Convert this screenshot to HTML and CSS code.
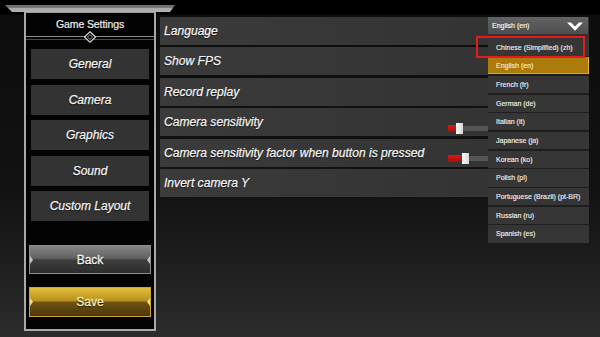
FILE: index.html
```html
<!DOCTYPE html>
<html>
<head>
<meta charset="utf-8">
<link rel="stylesheet" href="styles.css">
</head>
<body>
<div class="screen">
  <div class="topbar"></div>
  <div class="main">
    <aside class="panel">
      <div class="title">Game Settings</div>
      <div class="divider">
        <svg class="ornament" width="14" height="12" viewBox="0 0 14 12">
          <polygon points="7,0.8 12.6,6 7,11.2 1.4,6" fill="#000" stroke="#d8d8d8" stroke-width="1.2"/>
          <polygon points="7,3.6 9.6,6 7,8.4 4.4,6" fill="#000" stroke="#9a9a9a" stroke-width="1"/>
        </svg>
      </div>
      <nav class="nav">
        <div class="nav-btn">General</div>
        <div class="nav-btn">Camera</div>
        <div class="nav-btn">Graphics</div>
        <div class="nav-btn">Sound</div>
        <div class="nav-btn">Custom Layout</div>
      </nav>
      <div class="actions">
        <div class="act-btn back">Back</div>
        <div class="act-btn save">Save</div>
      </div>
    </aside>
    <section class="content">
      <div class="row">Language</div>
      <div class="row">Show FPS</div>
      <div class="row">Record replay</div>
      <div class="row">Camera sensitivity
        <div class="slider"><span class="fill" style="width:8px"></span><span class="knob"></span><span class="track"></span></div>
      </div>
      <div class="row">Camera sensitivity factor when button is pressed
        <div class="slider"><span class="fill" style="width:14px"></span><span class="knob"></span><span class="track"></span></div>
      </div>
      <div class="row">Invert camera Y</div>
    </section>
  </div>

  <div class="dropdown">
    <div class="dd-head">
      <span>English (en)</span>
      <svg class="chev" width="16" height="9" viewBox="0 0 16 9">
        <polygon points="0,0.5 4,0.5 8,4.5 12,0.5 16,0.5 8,8.8" fill="#fff"/>
      </svg>
    </div>
    <ul class="dd-list">
      <li class="dd-item">Chinese (Simplified) (zh)</li>
      <li class="dd-item selected">English (en)</li>
      <li class="dd-item">French (fr)</li>
      <li class="dd-item">German (de)</li>
      <li class="dd-item">Italian (it)</li>
      <li class="dd-item">Japanese (ja)</li>
      <li class="dd-item">Korean (ko)</li>
      <li class="dd-item">Polish (pl)</li>
      <li class="dd-item">Portuguese (Brazil) (pt-BR)</li>
      <li class="dd-item">Russian (ru)</li>
      <li class="dd-item">Spanish (es)</li>
    </ul>
  </div>
  <div class="highlight"></div>
</div>
</body>
</html>
```

FILE: styles.css
```css
* { box-sizing: border-box; }

html, body {
  margin: 0;
  padding: 0;
}

body {
  width: 600px;
  height: 337px;
  overflow: hidden;
  font-family: "Liberation Sans", Arial, sans-serif;
  background: linear-gradient(180deg, #000 0px, #000 14px, #0d0d0d 15px, #121212 190px, #1c1c1c 250px, #2c2c2c 337px);
  color: #f2f2f2;
}

.screen {
  position: relative;
  width: 600px;
  height: 337px;
  display: flex;
  flex-direction: column;
}

.topbar {
  margin: 5px 0 0 5px;
  width: 170px;
  height: 7px;
  flex: none;
  background: linear-gradient(180deg, #6e6e6e 0%, #7a7a7a 40%, #a8a8a8 45%, #b4b4b4 100%);
  clip-path: polygon(0 0, 100% 0, calc(100% - 5px) 100%, 7px 100%);
}

.main {
  display: flex;
  gap: 4px;
  padding-left: 24px;
}

/* left panel */
.panel {
  width: 132px;
  height: 319px;
  border: 2px solid #a9a9a9;
  border-top: 1px solid #9a9a9a;
  background: #030303;
  display: flex;
  flex-direction: column;
}

.title {
  height: 23px;
  line-height: 23px;
  text-align: center;
  font-size: 10.5px;
  color: #f0f0f0;
  letter-spacing: -0.1px;
  -webkit-text-stroke: 0.2px #f0f0f0;
}

.divider {
  position: relative;
  height: 4px;
  border-top: 1px solid #8c8c8c;
  border-bottom: 1px solid #4a4a4a;
}

.ornament {
  position: absolute;
  left: 57px;
  top: -6px;
}

.nav {
  margin-top: 9px;
  padding: 0 5px;
  display: flex;
  flex-direction: column;
  gap: 5.5px;
}

.nav-btn {
  height: 30px;
  background: #333333;
  display: flex;
  align-items: center;
  justify-content: center;
  font-size: 12px;
  font-style: italic;
  color: #f4f4f4;
  -webkit-text-stroke: 0.25px #f4f4f4;
  text-shadow: 0 1px 1px #000;
}

.actions {
  margin-top: auto;
  margin-bottom: 12px;
  padding: 0 3px;
  display: flex;
  flex-direction: column;
  gap: 13px;
}

.act-btn {
  position: relative;
  display: flex;
  align-items: center;
  justify-content: center;
  font-size: 12px;
  text-shadow: 0 1px 1px #000;
}

.act-btn::before,
.act-btn::after {
  content: "";
  position: absolute;
  top: 50%;
  margin-top: -4px;
  width: 0;
  height: 0;
  border-top: 4px solid transparent;
  border-bottom: 4px solid transparent;
}

.act-btn::before {
  left: 0;
  border-left: 3px solid rgba(230, 230, 230, 0.8);
}

.act-btn::after {
  right: 0;
  border-right: 3px solid rgba(230, 230, 230, 0.8);
}

.back {
  height: 29px;
  border: 1px solid #8e8e8e;
  background: linear-gradient(180deg, #858585 0%, #626262 45%, #3e3e3e 52%, #2c2c2c 100%);
  color: #f4f4f4;
  -webkit-text-stroke: 0.3px #f4f4f4;
}

.save {
  height: 30px;
  border: 1px solid #c9a53c;
  background: linear-gradient(180deg, #e2bf3a 0%, #b9911e 45%, #6e5212 52%, #4c360a 100%);
  color: #f6eeb8;
  -webkit-text-stroke: 0.3px #f6eeb8;
}

.save::before { border-left-color: rgba(250, 235, 150, 0.9); }
.save::after { border-right-color: rgba(250, 235, 150, 0.9); }

/* right content */
.content {
  margin-top: 5px;
  width: 429px;
  display: flex;
  flex-direction: column;
  gap: 2.4px;
}

.row {
  height: 28px;
  padding-left: 4px;
  display: flex;
  align-items: center;
  background: linear-gradient(90deg, #3b3b3b 0%, #353535 60%, #323232 100%);
  font-size: 12.1px;
  font-style: italic;
  color: #f4f4f4;
  -webkit-text-stroke: 0.25px #f4f4f4;
  text-shadow: 0 1px 1px #000;
}

.slider {
  margin-left: auto;
  margin-right: 51px;
  width: 90px;
  height: 11px;
  align-self: flex-end;
  margin-bottom: 2.5px;
  display: flex;
  align-items: center;
}

.fill {
  height: 7px;
  background: linear-gradient(180deg, #d81a14, #a80c08);
}

.knob {
  width: 7px;
  height: 11px;
  background: linear-gradient(90deg, #ffffff, #d6d6d6);
}

.track {
  flex: 1;
  height: 5px;
  background: #555;
}

/* dropdown overlay */
.dropdown {
  position: absolute;
  left: 488px;
  top: 17px;
  width: 101px;
}

.dd-head {
  height: 17px;
  width: 100px;
  padding: 0 5px 0 4px;
  display: flex;
  align-items: center;
  justify-content: space-between;
  background: linear-gradient(180deg, #636363, #4e4e4e);
  font-size: 7px;
  color: #f4f4f4;
  -webkit-text-stroke: 0.15px #f4f4f4;
}

.chev {
  margin-top: 1px;
}

.dd-list {
  list-style: none;
  margin: 4.5px 0 0;
  padding: 0;
  display: flex;
  flex-direction: column;
  gap: 1.5px;
  background: #1e1e1e;
}

.dd-item {
  height: 17.2px;
  padding-left: 8px;
  display: flex;
  align-items: center;
  background: #363636;
  font-size: 7px;
  color: #ececec;
  -webkit-text-stroke: 0.15px #ececec;
}

.dd-item.selected {
  background: #ad7b0c;
  color: #f6e8c8;
  -webkit-text-stroke: 0.15px #f6e8c8;
  box-shadow: inset -1px 0 0 #e8b83a, inset 0 -1px 0 #d9a62c;
}

.highlight {
  position: absolute;
  left: 476px;
  top: 36px;
  width: 109px;
  height: 22px;
  border: 2px solid #e41b1b;
}
```
